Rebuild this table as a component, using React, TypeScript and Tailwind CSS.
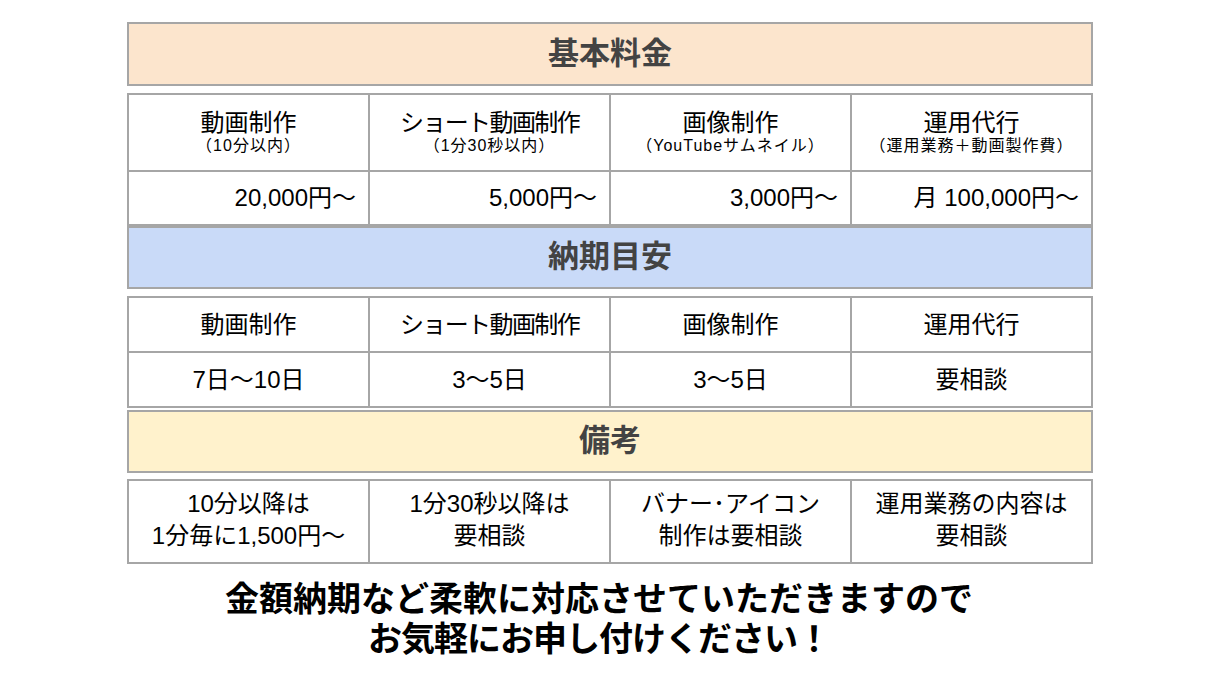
import React from "react";

const font = { fontFamily: '"Liberation Sans", "Noto Sans CJK JP", sans-serif' };

function Header({ title, bg, h }: { title: string; bg: string; h: string }) {
  return (
    <div
      className={`${bg} ${h} border-2 border-[#a6a6a6] flex items-center justify-center text-[31px] font-bold text-[#434343]`}
    >
      {title}
    </div>
  );
}

const cols = ["動画制作", "ショート動画制作", "画像制作", "運用代行"];
const subs = ["（10分以内）", "（1分30秒以内）", "（YouTubeサムネイル）", "（運用業務＋動画製作費）"];
const prices = ["20,000円～", "5,000円～", "3,000円～", "月 100,000円～"];
const days = ["7日～10日", "3～5日", "3～5日", "要相談"];
const notes: [string, string][] = [
  ["10分以降は", "1分毎に1,500円～"],
  ["1分30秒以降は", "要相談"],
  ["バナー･アイコン", "制作は要相談"],
  ["運用業務の内容は", "要相談"],
];

const cell = "border-r-2 border-b-2 border-[#a6a6a6] bg-white";

function ColName({ c }: { c: string }) {
  return <span className={c.startsWith("ショート") ? "tracking-[-1.6px]" : ""}>{c}</span>;
}

export default function App() {
  return (
    <div className="w-[1220px] h-[686px] bg-white overflow-hidden" style={font}>
      <div className="w-[966px] mx-auto pt-[22px] flex flex-col text-black">
        <Header title="基本料金" bg="bg-[#fce5cd]" h="h-[64px]" />
        <div className="mt-[7px] grid grid-cols-4 border-l-2 border-t-2 border-[#a6a6a6]">
          {cols.map((c, i) => (
            <div key={c} className={`${cell} h-[77px] flex flex-col items-center justify-center`}>
              <div className="text-[24px] leading-[26px]">
                <ColName c={c} />
              </div>
              <div className="text-[16px] leading-[20px] tracking-[1px]">{subs[i]}</div>
            </div>
          ))}
          {prices.map((p, i) => (
            <div key={i} className={`${cell} h-[54px] flex items-center justify-end pr-3 text-[24px]`}>
              {p}
            </div>
          ))}
        </div>
        <Header title="納期目安" bg="bg-[#c9daf8]" h="h-[63px]" />
        <div className="mt-[7px] grid grid-cols-4 border-l-2 border-t-2 border-[#a6a6a6]">
          {cols.map((c) => (
            <div key={c} className={`${cell} h-[55px] flex items-center justify-center text-[24px]`}>
              <ColName c={c} />
            </div>
          ))}
          {days.map((d, i) => (
            <div key={i} className={`${cell} h-[55px] flex items-center justify-center text-[24px]`}>
              {d}
            </div>
          ))}
        </div>
        <div className="mt-[2px]">
          <Header title="備考" bg="bg-[#fff2cc]" h="h-[63px]" />
        </div>
        <div className="mt-[6px] grid grid-cols-4 border-l-2 border-t-2 border-[#a6a6a6]">
          {notes.map((n, i) => (
            <div
              key={i}
              className={`${cell} h-[83px] flex flex-col items-center justify-center pb-[3px] text-[24px] leading-[32px]`}
            >
              <div>{n[0]}</div>
              <div>{n[1]}</div>
            </div>
          ))}
        </div>
        <div
          className="mt-[13px] pr-[22px] flex flex-col items-center font-bold text-[34px] leading-[40px] text-black"
          style={{ fontFamily: '"Noto Sans CJK JP", sans-serif' }}
        >
          <div>金額納期など柔軟に対応させていただきますので</div>
          <div className="tracking-[-1px]">お気軽にお申し付けください！</div>
        </div>
      </div>
    </div>
  );
}
